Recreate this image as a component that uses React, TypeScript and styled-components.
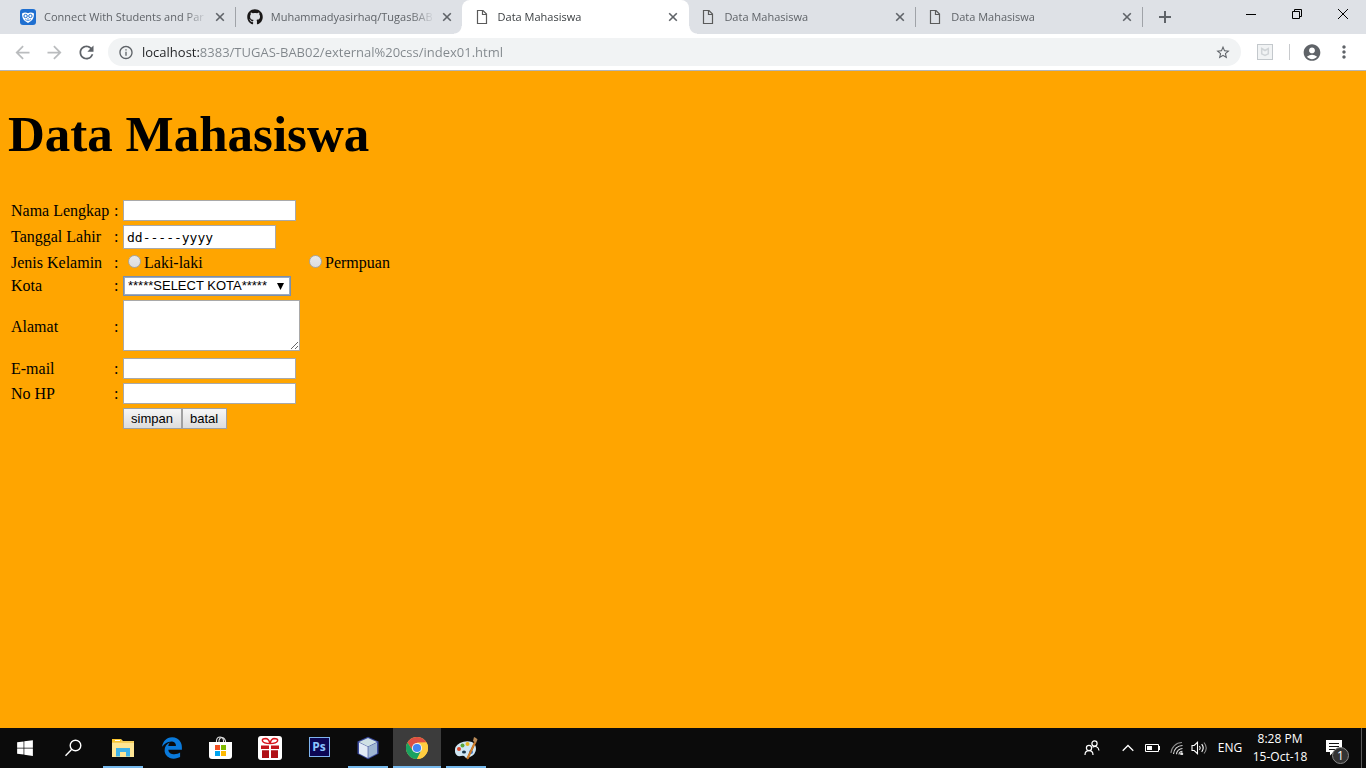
import React from 'react';
import styled, { createGlobalStyle, css } from 'styled-components';
import {
  MdAccountCircle,
  MdArrowBack,
  MdArrowForward,
  MdInfoOutline,
  MdMoreVert,
  MdRefresh,
  MdStarBorder,
} from 'react-icons/md';
import { FaEdgeLegacy, FaGithub, FaWindows } from 'react-icons/fa';

const uiFont = `'Open Sans', 'Noto Sans', sans-serif`;
const serifFont = `'Liberation Serif', 'Times New Roman', serif`;
const sansFont = `'Liberation Sans', Arial, sans-serif`;

const GlobalStyle = createGlobalStyle`
  *, *::before, *::after { box-sizing: border-box; }
  body { margin: 0; }
  button { font: inherit; cursor: default; }
  svg { display: block; }
`;

const Screen = styled.div`
  display: flex;
  flex-direction: column;
  min-height: 100vh;
  background: orange;
`;

/* ---------- browser frame ---------- */

const TabStrip = styled.header`
  display: flex;
  align-items: stretch;
  height: 34px;
  padding-left: 8px;
  background: #dee1e6;
  font: 11px/16px ${uiFont};
`;

const TabList = styled.div`
  display: flex;
  flex: 0 1 1134px;
  min-width: 0;
`;

const flare = css`
  content: '';
  position: absolute;
  bottom: 0;
  width: 8px;
  height: 8px;
`;

const Tab = styled.div<{ $active?: boolean; $divider?: boolean }>`
  position: relative;
  display: flex;
  align-items: center;
  flex: 1 1 0;
  min-width: 0;
  gap: 8px;
  padding: 0 7px 0 12px;
  color: ${(p) => (p.$active ? '#3c4043' : '#5f6368')};

  ${(p) =>
    p.$divider &&
    css`
      &::after {
        content: '';
        position: absolute;
        right: -1px;
        top: 7px;
        width: 1px;
        height: 20px;
        background: #a0a3a8;
      }
    `}

  ${(p) =>
    p.$active &&
    css`
      z-index: 1;
      margin-right: -1px;
      padding-right: 8px;
      background: #fff;
      border-radius: 8px 8px 0 0;
      &::before {
        ${flare}
        left: -8px;
        background: radial-gradient(circle at 0 0, transparent 7px, #fff 8px);
      }
      &::after {
        ${flare}
        right: -8px;
        background: radial-gradient(circle at 100% 0, transparent 7px, #fff 8px);
      }
    `}
`;

const TabTitle = styled.span`
  flex: 1;
  min-width: 0;
  margin-right: -4px;
  overflow: hidden;
  white-space: nowrap;
  mask-image: linear-gradient(to left, transparent, #000 24px);
`;

const IconButton = styled.button<{ $size?: number; $tone?: string }>`
  display: flex;
  align-items: center;
  justify-content: center;
  flex: none;
  width: ${(p) => p.$size ?? 16}px;
  height: ${(p) => p.$size ?? 16}px;
  padding: 0;
  border: 0;
  background: none;
  color: ${(p) => p.$tone ?? '#5f6368'};
`;

const NewTab = styled(IconButton)`
  align-self: center;
  margin-left: 9px;
`;

const WindowButtons = styled.div`
  display: flex;
  height: 28px;
  margin-left: auto;
`;

const WindowButton = styled.button`
  display: flex;
  align-items: center;
  justify-content: center;
  width: 46px;
  padding: 0;
  border: 0;
  background: none;
`;

const Toolbar = styled.nav`
  display: flex;
  align-items: center;
  height: 37px;
  padding: 0 8px;
  background: #fff;
  border-bottom: 1px solid #b4b5b8;
`;

const NavButtons = styled.div`
  display: flex;
  gap: 4px;
  margin-right: 8px;
`;

const AddressBar = styled.form`
  display: flex;
  align-items: center;
  flex: 1;
  min-width: 0;
  height: 28px;
  gap: 8px;
  padding: 0 10px;
  border-radius: 14px;
  background: #f1f3f4;
`;

const Address = styled.input`
  flex: 1;
  min-width: 0;
  height: 20px;
  padding: 0;
  border: 0;
  outline: 0;
  font: 13px/20px ${uiFont};
  color: #80868b;
  background: linear-gradient(to right, #202124 58px, #80868b 58px);
  background-clip: text;
  -webkit-text-fill-color: transparent;
`;

const ToolbarEnd = styled.div`
  display: flex;
  align-items: center;
  padding-left: 16px;
`;

const ToolbarRule = styled.span`
  width: 1px;
  height: 16px;
  margin: 0 12px 0 16px;
  background: #c8cacd;
`;

const ProfileButton = styled(IconButton)`
  margin-right: 8px;
`;

/* ---------- the web page ---------- */

const Page = styled.main`
  flex: 1;
  padding: 34px 8px;
  font: 16px/18px ${serifFont};
  color: #000;
`;

const Title = styled.h1`
  margin: 0 0 34px;
  font-size: 51px;
  line-height: 58px;
`;

const FormTable = styled.table`
  border-spacing: 2px;

  th,
  td {
    box-sizing: content-box;
    padding: 1px;
    font-weight: normal;
    text-align: left;
    white-space: nowrap;
  }
  th {
    min-width: 99px;
  }
`;

const Row = styled.tr<{ $height: number; $align?: string }>`
  td,
  th {
    height: ${(p) => p.$height}px;
  }
  td:nth-child(n + 3) {
    vertical-align: ${(p) => p.$align ?? 'middle'};
  }
`;

const Colon = styled.td`
  min-width: 5px;
`;

const fieldBorder = css`
  display: block;
  border: 1px solid #a9a9a9;
  border-radius: 0;
  outline: 0;
  background: #fff;
  color: #000;
`;

const TextField = styled.input`
  ${fieldBorder}
  width: 173px;
  height: 21px;
  padding: 1px 2px;
  font: 13px/16px ${sansFont};
`;

const DateField = styled(TextField)`
  width: 153px;
  height: 24px;
  padding: 1px 3px;
  font: 13px/16px 'DejaVu Sans Mono', monospace;
`;

const TextArea = styled.textarea`
  ${fieldBorder}
  width: 177px;
  height: 51px;
  padding: 2px;
  resize: both;
  font: 13px/16px ${sansFont};
`;

const CitySelect = styled.select`
  ${fieldBorder}
  width: 168px;
  height: 20px;
  margin: 0;
  padding: 0 16px 0 4px;
  appearance: none;
  border: 1px solid #7a8eac;
  box-shadow: inset 0 0 0 1px #9aaac0;
  background: #fff
    url("data:image/svg+xml,%3Csvg xmlns='http://www.w3.org/2000/svg' width='7' height='7'%3E%3Cpath d='M0 0h7L3.500 7z'/%3E%3C/svg%3E")
    no-repeat right 6px center;
  font: 13px/16px ${sansFont};
`;

const RadioLabel = styled.label`
  display: flex;
  align-items: center;
  gap: 3px;
  padding-left: 5px;
`;

const Radio = styled.input`
  appearance: none;
  flex: none;
  width: 13px;
  height: 13px;
  margin: 0 0 3px;
  border: 1px solid #a5a5a5;
  border-radius: 50%;
  background: linear-gradient(#e8e8e8, #dcdcdc);
`;

const PushButton = styled.button`
  height: 21px;
  padding: 0 8px 0 7px;
  border: 1px solid #a0a0a0;
  background: linear-gradient(#f6f6f6, #dcdcdc);
  color: #000;
  font: 13px/16px ${sansFont};
`;

const ButtonRow = styled.div`
  display: flex;
`;

/* ---------- taskbar ---------- */

const Taskbar = styled.footer`
  display: flex;
  align-items: stretch;
  height: 40px;
  padding-left: 1px;
  background: #0b0b0b;
  color: #fff;
  font: 12px/18px ${uiFont};
`;

const Apps = styled.div`
  display: flex;
  gap: 1px;
`;

const AppButton = styled.button<{ $state?: 'open' | 'focused' }>`
  display: flex;
  align-items: center;
  justify-content: center;
  width: 48px;
  padding: 0;
  border: 0;
  color: #fff;
  background: ${(p) => (p.$state === 'focused' ? '#3c3c3c' : 'none')};
  ${(p) =>
    p.$state &&
    css`
      background-image: linear-gradient(#76b9ed, #76b9ed);
      background-repeat: no-repeat;
      background-position: bottom center;
      background-size: ${p.$state === 'focused' ? '100%' : '40px'} 2px;
    `}
`;

const Tray = styled.div`
  display: flex;
  align-items: center;
  margin-left: auto;
`;

const TrayButton = styled.button<{ $width: number }>`
  position: relative;
  display: flex;
  align-items: center;
  justify-content: center;
  width: ${(p) => p.$width}px;
  height: 40px;
  padding: 0;
  border: 0;
  background: none;
  color: #fff;
`;

const Clock = styled(TrayButton)`
  flex-direction: column;
  white-space: nowrap;
`;

const Notifications = styled(TrayButton)`
  padding-right: 4px;
`;

const Badge = styled.span`
  position: absolute;
  left: 22px;
  top: 19px;
  width: 17px;
  height: 17px;
  border: 1px solid #8a8a8a;
  border-radius: 50%;
  background: #333;
  line-height: 15px;
  text-align: center;
`;

const ShowDesktop = styled.button`
  width: 5px;
  height: 40px;
  padding: 0;
  border: 0;
  border-left: 1px solid #5a5a5a;
  background: none;
`;

/* ---------- drawings ---------- */

const EdmodoIcon = () => (
  <svg width="16" height="16" viewBox="0 0 16 16">
    <rect width="16" height="16" rx="3" fill="#1f6fd0" />
    <path d="M2 4.500Q5 2.500 8 4.200Q11 2.500 14 4.500Q14 10 11 12L8 14L5 12Q2 10 2 4.500Z" fill="#fff" />
    <circle cx="5.600" cy="7" r="1.700" fill="none" stroke="#1f6fd0" />
    <circle cx="10.400" cy="7" r="1.700" fill="none" stroke="#1f6fd0" />
    <path d="M7 9.500h2L8 11z" fill="#1f6fd0" />
    <path d="M5 10.500Q8 13 11 10.500" fill="none" stroke="#1f6fd0" strokeWidth=".7" />
  </svg>
);

const PageIcon = () => (
  <svg width="16" height="16" viewBox="0 0 16 16" fill="none" stroke="#5a5a5a" strokeWidth="1.200">
    <path d="M3.500 1.500h5.500l3.500 3.500v9.500h-9z" />
    <path d="M8.500 1.500v4h4" />
  </svg>
);

const TabCloseIcon = () => (
  <svg width="10" height="10" viewBox="0 0 10 10">
    <path d="M1.200 1.200l7.600 7.600M8.800 1.200L1.200 8.800" stroke="currentColor" strokeWidth="1.600" />
  </svg>
);

const PlusIcon = () => (
  <svg width="12" height="12" viewBox="0 0 12 12">
    <path d="M6 0v12M0 6h12" stroke="currentColor" strokeWidth="2" />
  </svg>
);

const ShieldIcon = () => (
  <svg width="16" height="16" viewBox="0 0 16 16" fill="none">
    <rect x=".5" y=".5" width="15" height="15" fill="#f1f3f4" stroke="#c3c8cc" />
    <path d="M4.700 4.500L8 6.500l3.300-2v5.300L8 11.500 4.700 9.800z" stroke="#d0d4d7" strokeWidth="1.500" />
  </svg>
);

const MinimizeIcon = () => (
  <svg width="10" height="10" viewBox="0 0 10 10"><path d="M0 5.500h10" stroke="#000" /></svg>
);

const RestoreIcon = () => (
  <svg width="10" height="10" viewBox="0 0 10 10" fill="none" stroke="#000">
    <path d="M.5 2.500h7v7h-7z" />
    <path d="M2.500 2.500v-2h7v7h-2" />
  </svg>
);

const CloseIcon = () => (
  <svg width="10" height="10" viewBox="0 0 10 10"><path d="M0 0l10 10M10 0L0 10" stroke="#000" /></svg>
);

const SearchIcon = () => (
  <svg width="18" height="18" viewBox="0 0 18 18" fill="none" stroke="#fff" strokeWidth="1.400">
    <circle cx="10.500" cy="6.500" r="5.300" />
    <path d="M6.800 10.300L.5 16.700" />
  </svg>
);

const ExplorerIcon = () => (
  <svg width="22" height="20" viewBox="0 0 22 20">
    <path d="M0 1h9l2 2h11v16H0z" fill="#f5cf5d" />
    <path d="M0 5h22v14H0z" fill="#ffe694" />
    <path d="M0 1h9v3H0z" fill="#fbc62f" />
    <path d="M3 2h5v1H3z" fill="#fff" />
    <path d="M4 10h14v8.500h-4V14H8v4.500H4z" fill="#3fb2e8" />
  </svg>
);

const StoreIcon = () => (
  <svg width="24" height="24" viewBox="0 0 24 24">
    <path d="M7.500 7V4.500Q8 1 11 1t3.500 3.500V7M10 7V4.500Q10.500 1.500 13 1.500T16.500 5V7" fill="none" stroke="#ddd" strokeWidth="1.100" />
    <path d="M0 6h23v14q0 3-3 3H3q-3 0-3-3z" fill="#fff" />
    <path d="M6 9h5v5H6z" fill="#f25022" />
    <path d="M12 9h5v5h-5z" fill="#7fba00" />
    <path d="M6 15h5v5H6z" fill="#00a4ef" />
    <path d="M12 15h5v5h-5z" fill="#ffb900" />
  </svg>
);

const GiftIcon = () => (
  <svg width="24" height="24" viewBox="0 0 24 24">
    <rect width="24" height="24" rx="3" fill="#fff" />
    <path d="M12 7.500Q5.500 7.500 4.500 5t3.500-2.500q3 .5 4 5Q13 3 16 2.500q4.500 0 3.500 2.500T12 7.500" fill="none" stroke="#d8141c" strokeWidth="1.500" />
    <path d="M3 9.500h8V13H3zM13 9.500h8V13h-8z" fill="#c4151c" />
    <path d="M4 14.200h7V22H4zM13 14.200h7V22h-7z" fill="#b01016" />
  </svg>
);

const PhotoshopTile = styled.span`
  width: 21px;
  height: 20px;
  margin-bottom: 3px;
  border: 1px solid #7fb4f0;
  background: #0c0654;
  color: #8cc4ff;
  font: bold 12px/18px ${uiFont};
  text-align: center;
`;

const CubeIcon = () => (
  <svg width="24" height="24" viewBox="0 0 24 24">
    <path d="M12 .8L22.500 5.500v12.300L12 23.200 1.500 17.800V5.500z" fill="#39489a" />
    <path d="M12 2l9 4-9 4.500L3 6z" fill="#cfe0e4" />
    <path d="M3 6.500l8.700 4.200V22L3 17.500z" fill="#e3ebf6" />
    <path d="M21 6.500l-8.700 4.200V22l8.700-4.500z" fill="#9fb6d2" />
  </svg>
);

const ChromeIcon = () => (
  <svg width="22" height="22" viewBox="0 0 22 22">
    <circle cx="11" cy="11" r="11" fill="#ffcd40" />
    <path d="M1.470 5.500A11 11 0 0 1 20.530 5.500L11 6 6.670 13.500z" fill="#dd4f43" />
    <path d="M1.470 5.500A11 11 0 0 0 11 22L15.330 13.500 6.670 13.500z" fill="#1aa260" />
    <path d="M20.530 5.500H11L15.330 13.500 11 22A11 11 0 0 0 20.530 5.500z" fill="#ffcd40" />
    <circle cx="11" cy="11" r="5.100" fill="#f4f4f4" />
    <circle cx="11" cy="11" r="4.100" fill="#4285f4" />
  </svg>
);

const PaintIcon = () => (
  <svg width="24" height="24" viewBox="0 0 24 24">
    <path d="M1 16Q0 10 6 7t12-1q4 2 4 7t-6 8q-4 2-5 0t-4-1q-5 1-6-4z" fill="#cfe6f3" />
    <ellipse cx="10" cy="16" rx="2" ry="1.500" fill="#17354a" />
    <circle cx="5" cy="13" r="2" fill="#d9472b" />
    <circle cx="8.500" cy="9.500" r="2" fill="#5aa63c" />
    <circle cx="13.500" cy="8" r="2" fill="#e8b421" />
    <circle cx="17" cy="16" r="2" fill="#3f76c8" />
    <path d="M20.500 6l1.200.6L14 23l-1.200-.6z" fill="#e08b2e" stroke="#c47322" />
    <path d="M19 5l1-4 2 1 1.500 1.500L22 7z" fill="#b98a58" />
  </svg>
);

const PeopleIcon = () => (
  <svg width="16" height="16" viewBox="0 0 16 16" fill="none" stroke="#fff" strokeWidth="1.200">
    <circle cx="10.500" cy="3.500" r="2.600" />
    <circle cx="5" cy="8" r="2.600" />
    <path d="M1 15q0-4.300 4-4.300T9 15M8.500 7.300Q10.500 6 12.500 6.700T15 10.500" />
  </svg>
);

const ChevronIcon = () => (
  <svg width="12" height="8" viewBox="0 0 12 8"><path d="M.7 6.800L6 1.500l5.300 5.300" fill="none" stroke="#fff" strokeWidth="1.300" /></svg>
);

const BatteryIcon = () => (
  <svg width="16" height="10" viewBox="0 0 16 10">
    <path d="M.5 1.500h13v7H.5z" fill="none" stroke="#fff" />
    <path d="M14 3h1v4h-1zM2 3h5v4H2z" fill="#fff" />
  </svg>
);

const WifiIcon = () => (
  <svg width="14" height="14" viewBox="0 0 14 14" fill="none" stroke="#ddd" strokeWidth="1.100">
    <path d="M1 12A11 11 0 0 1 12 1.500" stroke="#8d8d8d" />
    <path d="M3.500 13A9 9 0 0 1 12.500 4.500M6.500 13.300A6 6 0 0 1 12.500 7.500" />
    <path d="M9 13.500a3.500 3.500 0 0 1 3.500-3.200" />
    <circle cx="11.700" cy="12.700" r="1" fill="#fff" />
  </svg>
);

const VolumeIcon = () => (
  <svg width="17" height="14" viewBox="0 0 17 14" fill="none" stroke="#fff" strokeWidth="1.100">
    <path d="M1 4.500h2.200L6.500 1.300v11.400L3.200 9.500H1z" />
    <path d="M8.500 5q1.500 2 0 4M10.700 3.200q3 3.800 0 7.600" />
    <path d="M13 1.500q4.500 5.500 0 11" stroke="#8d8d8d" />
  </svg>
);

const ActionCenterIcon = () => (
  <svg width="16" height="16" viewBox="0 0 16 16">
    <path d="M0 0h16v12H7.500L4 15.500V12H0z" fill="#fff" />
    <path d="M3 3.500h10M3 6.500h10M3 9.500h7" stroke="#111" />
  </svg>
);

/* ---------- content ---------- */

const tabs = [
  { title: 'Connect With Students and Par', icon: <EdmodoIcon />, divider: true },
  { title: 'Muhammadyasirhaq/TugasBAB', icon: <FaGithub size={16} color="#191717" /> },
  { title: 'Data Mahasiswa', icon: <PageIcon />, active: true },
  { title: 'Data Mahasiswa', icon: <PageIcon />, divider: true },
  { title: 'Data Mahasiswa', icon: <PageIcon />, divider: true },
];

type App = { name: string; icon: React.ReactNode; state?: 'open' | 'focused' };

const apps: App[] = [
  { name: 'Start', icon: <FaWindows size={18} /> },
  { name: 'Search', icon: <SearchIcon /> },
  { name: 'File Explorer', icon: <ExplorerIcon />, state: 'open' },
  { name: 'Microsoft Edge', icon: <FaEdgeLegacy size={22} color="#0a7adb" /> },
  { name: 'Store', icon: <StoreIcon /> },
  { name: 'Gifts', icon: <GiftIcon /> },
  { name: 'Photoshop', icon: <PhotoshopTile>Ps</PhotoshopTile> },
  { name: 'NetBeans', icon: <CubeIcon />, state: 'open' },
  { name: 'Chrome', icon: <ChromeIcon />, state: 'focused' },
  { name: 'Paint', icon: <PaintIcon />, state: 'open' },
];

export default function App() {
  return (
    <Screen>
      <GlobalStyle />
      <TabStrip>
        <TabList role="tablist">
          {tabs.map((tab, i) => (
            <Tab key={i} role="tab" aria-selected={!!tab.active} $active={tab.active} $divider={tab.divider}>
              {tab.icon}
              <TabTitle>{tab.title}</TabTitle>
              <IconButton aria-label="Close tab">
                <TabCloseIcon />
              </IconButton>
            </Tab>
          ))}
        </TabList>
        <NewTab $size={28} aria-label="New tab">
          <PlusIcon />
        </NewTab>
        <WindowButtons>
          <WindowButton aria-label="Minimize"><MinimizeIcon /></WindowButton>
          <WindowButton aria-label="Restore"><RestoreIcon /></WindowButton>
          <WindowButton aria-label="Close"><CloseIcon /></WindowButton>
        </WindowButtons>
      </TabStrip>

      <Toolbar>
        <NavButtons>
          <IconButton $size={28} $tone="#babcbe" aria-label="Back"><MdArrowBack size={21} /></IconButton>
          <IconButton $size={28} $tone="#babcbe" aria-label="Forward"><MdArrowForward size={21} /></IconButton>
          <IconButton $size={28} aria-label="Reload"><MdRefresh size={21} /></IconButton>
        </NavButtons>
        <AddressBar>
          <IconButton type="button" aria-label="Site information"><MdInfoOutline size={17} /></IconButton>
          <Address
            aria-label="Address"
            defaultValue="localhost:8383/TUGAS-BAB02/external%20css/index01.html"
          />
          <IconButton type="button" aria-label="Bookmark"><MdStarBorder size={17} /></IconButton>
        </AddressBar>
        <ToolbarEnd>
          <IconButton aria-label="Extension"><ShieldIcon /></IconButton>
          <ToolbarRule />
          <ProfileButton $size={20} aria-label="Profile"><MdAccountCircle size={21} /></ProfileButton>
          <IconButton $size={28} aria-label="Menu"><MdMoreVert size={20} /></IconButton>
        </ToolbarEnd>
      </Toolbar>

      <Page>
        <Title>Data Mahasiswa</Title>
        <FormTable>
          <tbody>
            <Row $height={21}>
              <th><label htmlFor="nama">Nama Lengkap</label></th>
              <Colon>:</Colon>
              <td><TextField id="nama" /></td>
            </Row>
            <Row $height={24}>
              <th><label htmlFor="tanggal">Tanggal Lahir</label></th>
              <Colon>:</Colon>
              <td><DateField id="tanggal" defaultValue="dd-----yyyy" /></td>
            </Row>
            <Row $height={19} $align="bottom">
              <th>Jenis Kelamin</th>
              <Colon>:</Colon>
              <td><RadioLabel><Radio type="radio" name="jenis" />Laki-laki</RadioLabel></td>
              <td><RadioLabel><Radio type="radio" name="jenis" />Permpuan</RadioLabel></td>
            </Row>
            <Row $height={20}>
              <th><label htmlFor="kota">Kota</label></th>
              <Colon>:</Colon>
              <td>
                <CitySelect id="kota">
                  <option>*****SELECT KOTA*****</option>
                </CitySelect>
              </td>
            </Row>
            <Row $height={54} $align="top">
              <th><label htmlFor="alamat">Alamat</label></th>
              <Colon>:</Colon>
              <td><TextArea id="alamat" /></td>
            </Row>
            <Row $height={21}>
              <th><label htmlFor="email">E-mail</label></th>
              <Colon>:</Colon>
              <td><TextField id="email" /></td>
            </Row>
            <Row $height={21}>
              <th><label htmlFor="hp">No HP</label></th>
              <Colon>:</Colon>
              <td><TextField id="hp" /></td>
            </Row>
            <Row $height={21}>
              <th />
              <Colon />
              <td>
                <ButtonRow>
                  <PushButton>simpan</PushButton>
                  <PushButton>batal</PushButton>
                </ButtonRow>
              </td>
            </Row>
          </tbody>
        </FormTable>
      </Page>

      <Taskbar>
        <Apps>
          {apps.map((app) => (
            <AppButton key={app.name} aria-label={app.name} $state={app.state}>
              {app.icon}
            </AppButton>
          ))}
        </Apps>
        <Tray>
          <TrayButton $width={48} aria-label="People"><PeopleIcon /></TrayButton>
          <TrayButton $width={24} aria-label="Hidden icons"><ChevronIcon /></TrayButton>
          <TrayButton $width={26} aria-label="Battery"><BatteryIcon /></TrayButton>
          <TrayButton $width={22} aria-label="Network"><WifiIcon /></TrayButton>
          <TrayButton $width={22} aria-label="Volume"><VolumeIcon /></TrayButton>
          <TrayButton $width={40}>ENG</TrayButton>
          <Clock $width={60}>
            <span>8:28 PM</span>
            <span>15-Oct-18</span>
          </Clock>
          <Notifications $width={51} aria-label="Notifications">
            <ActionCenterIcon />
            <Badge>1</Badge>
          </Notifications>
          <ShowDesktop aria-label="Show desktop" />
        </Tray>
      </Taskbar>
    </Screen>
  );
}
